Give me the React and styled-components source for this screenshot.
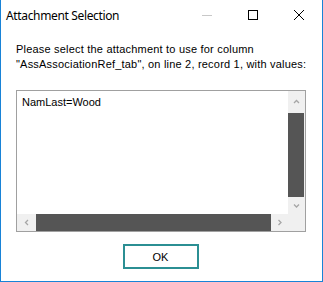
import React from "react";
import styled, { createGlobalStyle } from "styled-components";

const Global = createGlobalStyle`
  html, body { margin: 0; padding: 0; background: #fff; }
  * { box-sizing: border-box; }
`;

const Window = styled.div`
  width: 323px;
  height: 282px;
  background: #fff;
  border: 1px solid #1883d7;
  border-top: none;
  display: flex;
  flex-direction: column;
  font-family: "Liberation Sans", Arial, sans-serif;
  font-size: 11px;
  color: #000;
`;

const TitleBar = styled.div`
  height: 30px;
  display: flex;
  align-items: center;
  flex-shrink: 0;
`;

const Title = styled.div`
  flex: 1;
  padding-left: 5px;
  padding-top: 1px;
  font-family: "Noto Sans", "Open Sans", sans-serif;
  font-size: 12px;
  letter-spacing: -0.35px;
  color: #000;
`;

const CtrlButton = styled.div`
  width: 46px;
  height: 30px;
  display: flex;
  align-items: center;
  justify-content: center;
`;

const Body = styled.div`
  flex: 1;
  display: flex;
  flex-direction: column;
  padding: 12px 16px 0 15px;
`;

const Message = styled.div`
  line-height: 15px;
  white-space: nowrap;
  letter-spacing: 0.2px;
`;

const ListBox = styled.div`
  margin-top: 18px;
  width: 290px;
  height: 142px;
  border: 1px solid #a0a0a0;
  display: grid;
  grid-template-columns: 1fr 17px;
  grid-template-rows: 1fr 17px;
`;

const ListContent = styled.div`
  padding: 5px 0 0 5px;
  line-height: 13px;
`;

const VScroll = styled.div`
  background: #f0f0f0;
  display: grid;
  grid-template-rows: 22px 1fr 17px;
`;

const HScroll = styled.div`
  background: #f0f0f0;
  display: grid;
  grid-template-columns: 19px 1fr 17px;
`;

const Corner = styled.div`
  background: #f0f0f0;
`;

const Arrow = styled.div`
  display: flex;
  align-items: center;
  justify-content: center;
`;

const Thumb = styled.div`
  background: #555555;
  margin: ${(p) => (p.$vertical ? "0 1px 0 0" : "0")};
`;

const ButtonRow = styled.div`
  display: flex;
  justify-content: center;
  padding-top: 12px;
  padding-right: 1px;
`;

const OkButton = styled.div`
  width: 76px;
  height: 25px;
  border: 2px solid #2b8f93;
  display: flex;
  align-items: center;
  justify-content: center;
  font-size: 11px;
`;

const Chevron = ({ dir }) => {
  const paths = {
    up: "M1 4 L3.5 1.5 L6 4",
    down: "M1 1.5 L3.5 4 L6 1.5",
    left: "M4 1 L1.5 3.5 L4 6",
    right: "M1.5 1 L4 3.5 L1.5 6",
  };
  const vertical = dir === "up" || dir === "down";
  return (
    <svg width={vertical ? 7 : 6} height={vertical ? 6 : 7} viewBox={vertical ? "0 0 7 6" : "0 0 6 7"}>
      <path d={paths[dir]} fill="none" stroke="#a6a6a6" strokeWidth="1.3" />
    </svg>
  );
};

export default function App() {
  return (
    <>
      <Global />
      <Window>
        <TitleBar>
          <Title>Attachment Selection</Title>
          <CtrlButton>
            <svg width="10" height="10" viewBox="0 0 10 10">
              <line x1="0" y1="5.5" x2="10" y2="5.5" stroke="#c8c8c8" strokeWidth="1" />
            </svg>
          </CtrlButton>
          <CtrlButton>
            <svg width="10" height="10" viewBox="0 0 10 10">
              <rect x="0.5" y="0.5" width="9" height="9" fill="none" stroke="#000" strokeWidth="1" />
            </svg>
          </CtrlButton>
          <CtrlButton>
            <svg width="10" height="10" viewBox="0 0 10 10">
              <path d="M0 0 L10 10 M10 0 L0 10" stroke="#000" strokeWidth="1" />
            </svg>
          </CtrlButton>
        </TitleBar>
        <Body>
          <Message>
            Please select the attachment to use for column
            <br />
            "AssAssociationRef_tab", on line 2, record 1, with values:
          </Message>
          <ListBox>
            <ListContent>NamLast=Wood</ListContent>
            <VScroll>
              <Arrow><Chevron dir="up" /></Arrow>
              <Thumb $vertical />
              <Arrow><Chevron dir="down" /></Arrow>
            </VScroll>
            <HScroll>
              <Arrow><Chevron dir="left" /></Arrow>
              <Thumb />
              <Arrow><Chevron dir="right" /></Arrow>
            </HScroll>
            <Corner />
          </ListBox>
          <ButtonRow>
            <OkButton>OK</OkButton>
          </ButtonRow>
        </Body>
      </Window>
    </>
  );
}
